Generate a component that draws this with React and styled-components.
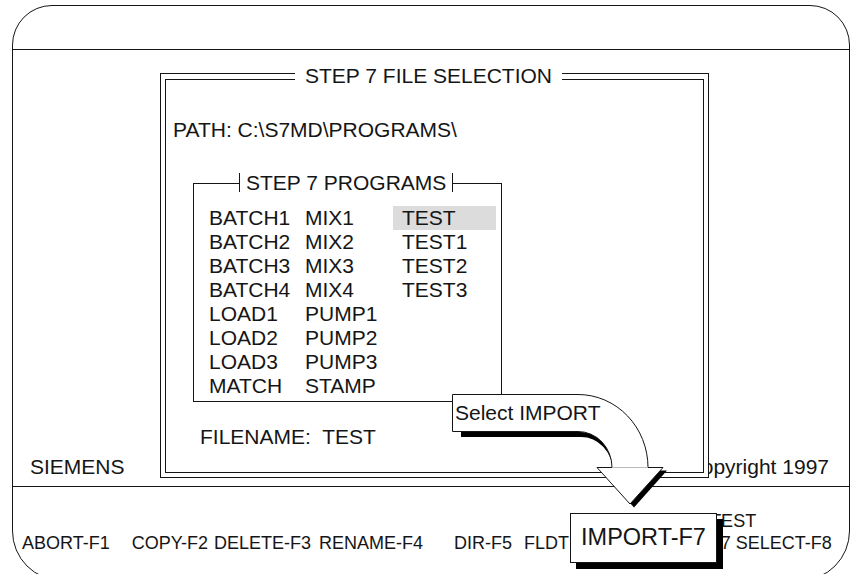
import React from "react";
import styled, { createGlobalStyle } from "styled-components";

const ink = "#151515";

const GlobalStyle = createGlobalStyle`
    html, body {
        margin: 0;
        padding: 0;
        background: #fff;
        overflow: hidden;
    }
    body {
        font-family: "Liberation Sans", Arial, Helvetica, sans-serif;
        color: ${ink};
    }
`;

const Page = styled.div`
    width: 850px;
    height: 574px;
    overflow: hidden;
    padding: 5px 0 0 12px;
    box-sizing: border-box;
`;

const Frame = styled.div`
    position: relative;
    width: 838px;
    height: 576px;
    box-sizing: border-box;
    border: 1px solid ${ink};
    border-radius: 40px 40px 50px 50px;
    display: flex;
    flex-direction: column;
`;

const TopBar = styled.div`
    height: 43px;
    flex-shrink: 0;
    border-bottom: 1px solid ${ink};
`;

const Workspace = styled.div`
    height: 436px;
    flex-shrink: 0;
    border-bottom: 1px solid ${ink};
    display: grid;
    & > * {
        grid-area: 1 / 1;
    }
`;

const Footer = styled.div`
    align-self: end;
    display: flex;
    justify-content: space-between;
    padding: 0 20px 7px 17px;
    font-size: 21px;
    line-height: 24px;
`;

const Dialog = styled.div`
    position: relative;
    z-index: 1;
    align-self: start;
    justify-self: start;
    margin: 23px 0 0 147px;
    width: 549px;
    height: 405px;
    box-sizing: border-box;
    padding: 5px 4px 4px 4px;
    border: 1px solid ${ink};
    background: #fff;
    font-size: 21px;
    line-height: 24px;
`;

const DialogTitle = styled.div`
    position: absolute;
    top: -10px;
    left: 134px;
    padding: 0 10px;
    background: #fff;
    white-space: nowrap;
`;

const DialogBody = styled.div`
    height: 100%;
    box-sizing: border-box;
    border: 1px solid ${ink};
    display: flex;
    flex-direction: column;
    align-items: flex-start;
`;

const Line = styled.div`
    margin: ${(p) => p.$top || 0}px 0 0 ${(p) => p.$left || 0}px;
    white-space: pre;
`;

const ProgramBox = styled.div`
    position: relative;
    margin: 41px 0 0 27px;
    width: 309px;
    height: 219px;
    box-sizing: border-box;
    border: 1px solid ${ink};
    padding: 22px 0 0 15px;
`;

const BoxTitle = styled.div`
    position: absolute;
    top: -11px;
    left: 45px;
    height: 19px;
    line-height: 19px;
    padding: 0 6px;
    background: #fff;
    border-left: 1px solid ${ink};
    border-right: 1px solid ${ink};
    white-space: nowrap;
`;

const ProgramGrid = styled.div`
    display: grid;
    grid-auto-flow: column;
    grid-template-rows: repeat(8, 24px);
    grid-template-columns: 96px 88px 103px;
`;

const Program = styled.div`
    padding-left: ${(p) => (p.$col === 2 ? 9 : 0)}px;
    background: ${(p) => (p.$selected ? "#dcdcdc" : "transparent")};
`;

const BottomBar = styled.div`
    flex: 1;
    padding: 23px 0 0 9px;
`;

const Keys = styled.div`
    display: flex;
    align-items: flex-end;
    font-size: 18px;
    line-height: 22px;
    white-space: nowrap;
`;

const Key = styled.div`
    display: flex;
    flex-direction: column;
    align-items: flex-start;
    margin-left: ${(p) => p.$gap}px;
`;

const KeyTop = styled.span`
    width: 0;
    margin-left: ${(p) => p.$indent}px;
    overflow: visible;
`;

const ImportKey = styled.div`
    position: absolute;
    z-index: 3;
    left: 557px;
    top: 507px;
    width: 147px;
    height: 50px;
    box-sizing: border-box;
    border: 1px solid ${ink};
    background: #fff;
    box-shadow: 6px 6px 0 #000;
    display: flex;
    align-items: center;
    justify-content: center;
    font-size: 23.5px;
    padding-bottom: 2px;
`;

const Callout = styled.div`
    position: absolute;
    z-index: 2;
    left: 427px;
    top: 379px;
    width: 240px;
    height: 130px;
`;

const CalloutLabel = styled.div`
    position: absolute;
    left: 15px;
    top: 16px;
    font-size: 21px;
    line-height: 24px;
    white-space: nowrap;
`;

const columns = [
    ["BATCH1", "BATCH2", "BATCH3", "BATCH4", "LOAD1", "LOAD2", "LOAD3", "MATCH"],
    ["MIX1", "MIX2", "MIX3", "MIX4", "PUMP1", "PUMP2", "PUMP3", "STAMP"],
    ["TEST", "TEST1", "TEST2", "TEST3"]
];

const keys = [
    { label: "ABORT-F1", gap: 0 },
    { label: "COPY-F2", gap: 22 },
    { label: "DELETE-F3", gap: 6 },
    { label: "RENAME-F4", gap: 8 },
    { label: "DIR-F5", gap: 31 },
    { label: "FLDTEST-F6", gap: 12 },
    { label: "IMPORT-F7", gap: 5, top: "TEST", indent: 75 },
    { label: "SELECT-F8", gap: 5 }
];

function Arrow() {
    return (
        <svg width="240" height="130" viewBox="440 385 240 130">
            <path d="M461 434.5 H581 A34 36 0 0 1 615 470.5" stroke="#000" strokeWidth="5" fill="none" />
            <polygon points="601,470.5 667,470.5 634,507.5" fill="#000" />
            <path
                d="M452.5 394.5 H578 A70 73 0 0 1 648 467.5 H663 L630 504 L597 467.5 H612 A34 36 0 0 0 578 431.5 H452.5 Z"
                fill="#fff"
                stroke={ink}
                strokeWidth="1"
            />
            <line x1="612.5" y1="467.5" x2="647.5" y2="467.5" stroke="#bbb" strokeWidth="1" />
        </svg>
    );
}

export default function App() {
    return (
        <Page>
            <GlobalStyle />
            <Frame>
                <TopBar />
                <Workspace>
                    <Footer>
                        <span>SIEMENS</span>
                        <span>Copyright 1997</span>
                    </Footer>
                    <Dialog>
                        <DialogTitle>STEP 7 FILE SELECTION</DialogTitle>
                        <DialogBody>
                            <Line $top={38} $left={7}>
                                PATH: C:\S7MD\PROGRAMS\
                            </Line>
                            <ProgramBox>
                                <BoxTitle>STEP 7 PROGRAMS</BoxTitle>
                                <ProgramGrid>
                                    {columns.map((col, c) =>
                                        col.map((name, r) => (
                                            <Program
                                                key={name}
                                                $col={c}
                                                $selected={c === 2 && r === 0}
                                                style={{ gridColumn: c + 1, gridRow: r + 1 }}
                                            >
                                                {name}
                                            </Program>
                                        ))
                                    )}
                                </ProgramGrid>
                            </ProgramBox>
                            <Line $top={23} $left={34}>
                                FILENAME:  TEST
                            </Line>
                        </DialogBody>
                    </Dialog>
                </Workspace>
                <BottomBar>
                    <Keys>
                        {keys.map((k) => (
                            <Key key={k.label} $gap={k.gap}>
                                {k.top && <KeyTop $indent={k.indent}>{k.top}</KeyTop>}
                                <span>{k.label}</span>
                            </Key>
                        ))}
                    </Keys>
                </BottomBar>
                <Callout>
                    <Arrow />
                    <CalloutLabel>Select IMPORT</CalloutLabel>
                </Callout>
                <ImportKey>IMPORT-F7</ImportKey>
            </Frame>
        </Page>
    );
}
